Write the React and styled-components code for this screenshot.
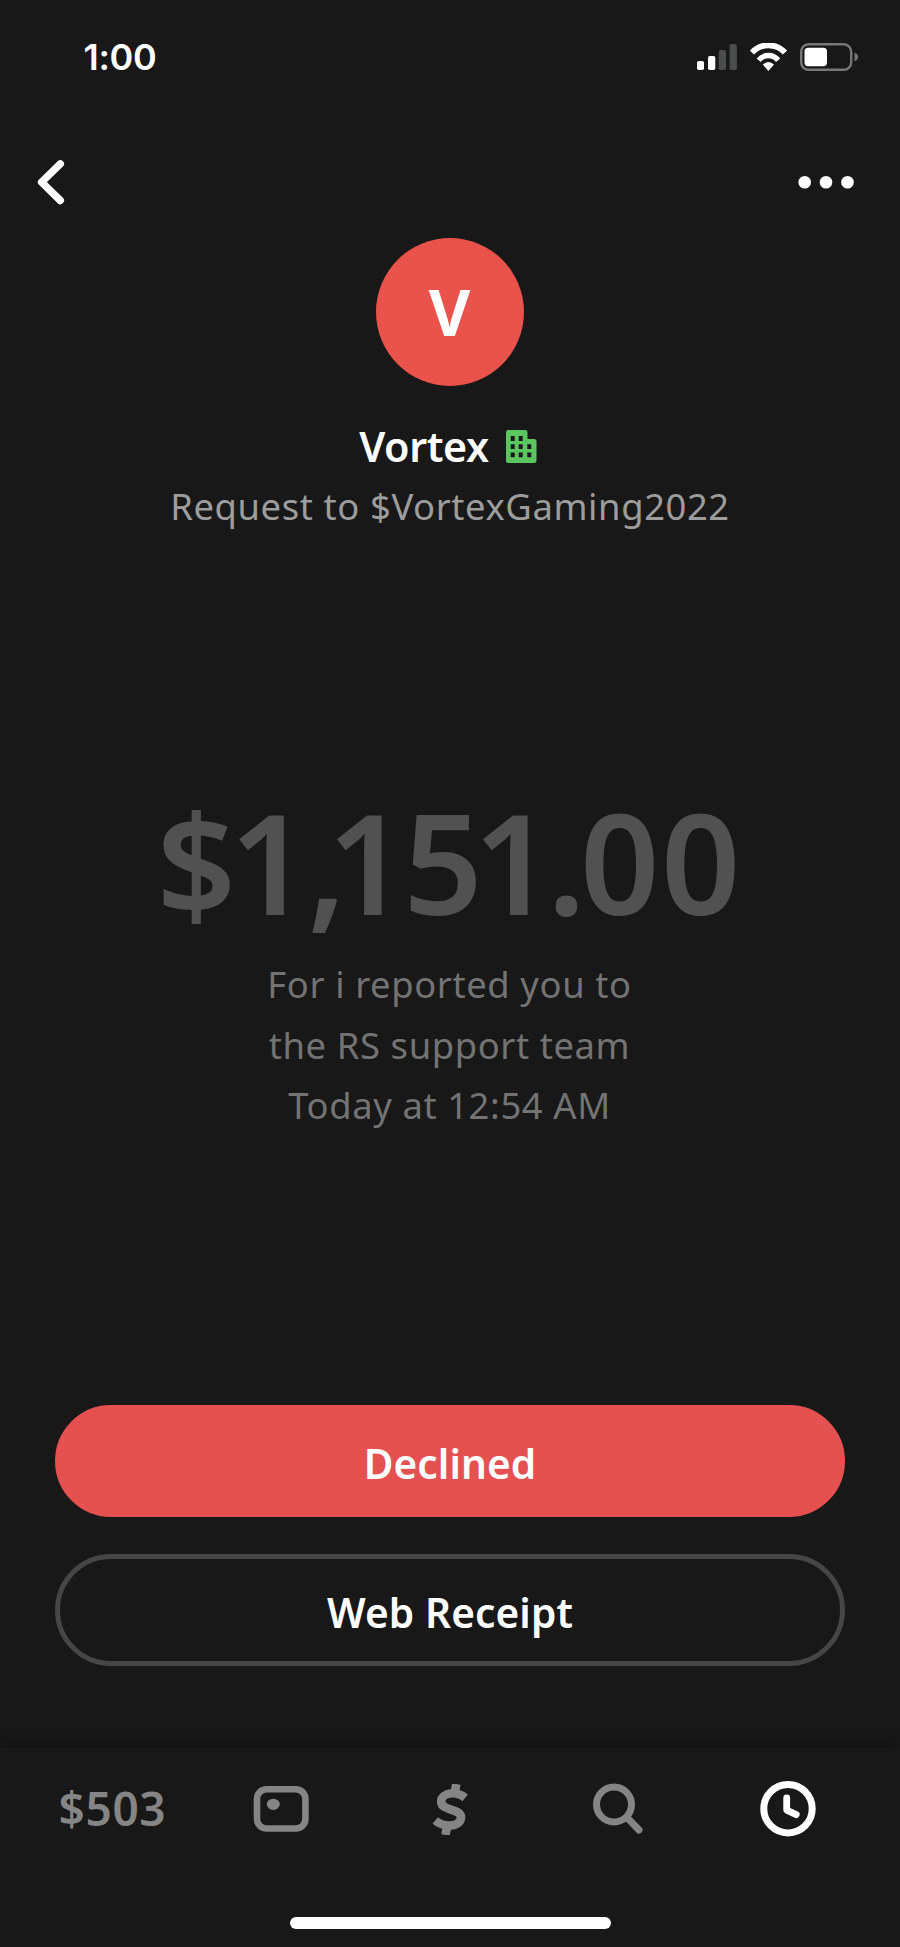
import React from "react";
import styled, { createGlobalStyle } from "styled-components";

const GlobalStyle = createGlobalStyle`
  * {
    box-sizing: border-box;
  }

  body {
    margin: 0;
    background-color: #181818;
  }

  svg {
    display: block;
  }
`;

const Screen = styled.main`
  width: 900px;
  height: 1947px;
  display: flex;
  flex-direction: column;
  background-color: #181818;
  color: #ffffff;
  font-family: "Noto Sans", "Open Sans", sans-serif;
  overflow: hidden;
`;

const StatusBar = styled.div`
  height: 114px;
  padding: 0 42px 0 83.5px;
  display: flex;
  align-items: center;
  justify-content: space-between;
`;

const Time = styled.span`
  font-family: "Inter", sans-serif;
  font-size: 36px;
  font-weight: 600;
  line-height: 40px;
  letter-spacing: -0.3px;
`;

const StatusIcons = styled.div`
  display: flex;
  align-items: center;
  gap: 13px;
`;

const Header = styled.header`
  height: 123.5px;
  padding: 12px 46px 0 37px;
  display: flex;
  align-items: center;
  justify-content: space-between;
`;

const Profile = styled.section`
  display: flex;
  flex-direction: column;
  align-items: center;
`;

const Avatar = styled.div`
  width: 148px;
  height: 148px;
  padding-right: 1px;
  border-radius: 50%;
  background-color: #e9534b;
  display: flex;
  align-items: center;
  justify-content: center;
  font-size: 64px;
  font-weight: 700;
  line-height: 146px;
`;

const NameRow = styled.div`
  height: 60px;
  margin: 30.5px 4px 0 0;
  display: flex;
  align-items: center;
  gap: 17px;
`;

const Name = styled.h1`
  margin: 0;
  font-size: 41.3px;
  font-weight: 600;
  line-height: 60px;
  letter-spacing: -0.4px;
`;

const Handle = styled.p`
  margin: 5px 0 0;
  font-size: 36.4px;
  line-height: 50px;
  letter-spacing: 0.6px;
  color: #9d9d9d;
`;

const Payment = styled.section`
  margin-top: 255px;
  display: flex;
  flex-direction: column;
  align-items: center;
`;

const Amount = styled.div`
  padding-right: 3px;
  font-size: 139px;
  font-weight: 600;
  line-height: 150px;
  color: #515151;
  white-space: nowrap;
`;

const Glyph = styled.span`
  letter-spacing: ${(p) => p.$spacing}px;
`;

const Note = styled.p`
  width: 400px;
  margin: 18px 0 0;
  padding-right: 1px;
  font-size: 36.4px;
  line-height: 60.5px;
  letter-spacing: 0.6px;
  text-align: center;
  color: #737373;
`;

const Actions = styled.section`
  margin-top: auto;
  padding: 0 55px;
  display: flex;
  flex-direction: column;
  gap: 37px;
`;

const Button = styled.button`
  height: 112px;
  padding: 5px 0 0;
  border: 5px solid ${(p) => (p.$filled ? "#e55151" : "#464646")};
  border-radius: 56px;
  background-color: ${(p) => (p.$filled ? "#e55151" : "transparent")};
  color: #ffffff;
  font-family: inherit;
  font-size: 40.6px;
  font-weight: 600;
  line-height: 56px;
  letter-spacing: 0.1px;
`;

const TabBar = styled.nav`
  height: 122px;
  margin-top: 82px;
  padding: 0 28px;
  display: grid;
  grid-template-columns: repeat(5, 1fr);
  align-items: center;
  justify-items: center;
  background-color: #181818;
  box-shadow: 0 -4px 14px rgba(0, 0, 0, 0.25);
`;

const Tab = styled.div`
  color: ${(p) => (p.$active ? "#ffffff" : "#858585")};
`;

const Balance = styled.span`
  display: block;
  margin-top: -2px;
  font-size: 46px;
  font-weight: 600;
  line-height: 60px;
  letter-spacing: 0.6px;
`;

const HomeArea = styled.div`
  height: 77px;
  padding-top: 47px;
  background-color: #181818;
`;

const HomeIndicator = styled.div`
  width: 321px;
  height: 12px;
  margin: 0 auto;
  border-radius: 6px;
  background-color: #ffffff;
`;

const SignalIcon = () => (
  <svg width="40" height="26" viewBox="0 0 40 26">
    <rect x="0" y="17" width="7" height="9" rx="1.8" fill="#fff" />
    <rect x="11" y="12" width="7.3" height="14" rx="1.8" fill="#fff" />
    <rect x="21.7" y="6" width="7.3" height="20" rx="1.8" fill="#4b4d4d" />
    <rect x="32.6" y="0" width="7.3" height="26" rx="1.8" fill="#4b4d4d" />
  </svg>
);

const WifiIcon = () => (
  <svg width="37" height="29" viewBox="0 0 37 29">
    <g fill="none" stroke="#fff">
      <path d="M1.9 9.6A22.3 22.3 0 0 1 34.9 9.6" strokeWidth="5.8" />
      <path d="M8.7 17.2A12.4 12.4 0 0 1 28.1 17.2" strokeWidth="5.4" />
    </g>
    <path d="M18.4 28L12.8 21.6Q18.4 16.4 24 21.6Z" fill="#fff" />
  </svg>
);

const BatteryIcon = () => (
  <svg width="58" height="28" viewBox="0 0 58 28">
    <rect x="1.2" y="1.2" width="50" height="25.6" rx="7.5" fill="none" stroke="#777" strokeWidth="2.4" />
    <rect x="4.5" y="4.8" width="22.5" height="18.4" rx="3.6" fill="#fff" />
    <path d="M54.5 9.8Q58 11 58 14T54.5 18.2Z" fill="#777" />
  </svg>
);

const BackIcon = () => (
  <svg width="28" height="46" viewBox="0 0 28 46">
    <path
      d="M23.3 4.9L4.6 23.2L23.3 41.5"
      fill="none"
      stroke="#fff"
      strokeWidth="7.4"
      strokeLinecap="round"
      strokeLinejoin="round"
    />
  </svg>
);

const MoreIcon = () => (
  <svg width="56" height="14" viewBox="0 0 56 14">
    <circle cx="6.7" cy="7.2" r="6.3" fill="#fff" />
    <circle cx="28" cy="7.2" r="6.3" fill="#fff" />
    <circle cx="49.5" cy="7.2" r="6.3" fill="#fff" />
  </svg>
);

const BuildingIcon = () => (
  <svg width="31" height="33" viewBox="0 0 31 33">
    <path
      d="M2.5 0H19Q21.5 0 21.5 2.5V9H28Q30.5 9 30.5 11.5V30.5Q30.5 33 28 33H2.5Q0 33 0 30.5V2.5Q0 0 2.5 0Z"
      fill="#5bc660"
    />
    <path
      d="M4.7 6h4v5h-4zM12.7 6h4v5h-4zM4.7 14.3h4v4.8h-4zM12.7 14.3h4v4.8h-4zM21.3 14.3h4v4.8h-4zM4.7 22.4h4v4.8h-4zM12.7 22.4h4v4.8h-4zM21.3 22.4h4v4.8h-4z"
      fill="#181818"
    />
  </svg>
);

const CardIcon = () => (
  <svg width="56" height="46" viewBox="0 0 56 46">
    <rect x="4" y="3.3" width="48.4" height="39.2" rx="9.5" fill="none" stroke="currentColor" strokeWidth="6.6" />
    <ellipse cx="20.3" cy="18.3" rx="6.5" ry="5.6" fill="currentColor" />
  </svg>
);

const DollarIcon = () => (
  <svg width="36" height="51" viewBox="0 0 36 51">
    <g fill="none" stroke="currentColor" strokeWidth="8.6">
      <path d="M33.2 13.8C28.5 10 24 9 20 9.3C13.5 9.7 9.2 13 9.2 17.4C9.2 22.5 14 24 19 25.6C24.5 27.3 29 29 29 33.3C29 38.8 23 42 17 41.6C11.5 41.3 7.5 40 3.2 36.5" />
      <path d="M24.2 0L23 8M14.8 43L13.6 51" />
    </g>
  </svg>
);

const SearchIcon = () => (
  <svg width="52" height="52" viewBox="0 0 52 52">
    <g fill="none" stroke="currentColor">
      <circle cx="21" cy="21.5" r="17.5" strokeWidth="7" />
      <path d="M34 34.5L46 47" strokeWidth="7" strokeLinecap="round" />
    </g>
  </svg>
);

const ClockIcon = () => (
  <svg width="56" height="56" viewBox="0 0 56 56">
    <g fill="none" stroke="currentColor" strokeWidth="7">
      <circle cx="28" cy="27.7" r="24.2" />
      <path d="M26.7 17V29.1L36.2 33.6" strokeWidth="6.8" strokeLinecap="round" strokeLinejoin="round" />
    </g>
  </svg>
);

// each glyph keeps its own advance, the ones and the comma sit tighter
const amount = [
  ["$", -6.5],
  ["1", -1.5],
  [",", -19],
  ["1", -3.5],
  ["5", -9.5],
  ["1", -5.5],
  [".", -5.6],
  ["0", 1.5],
  ["0", 0],
];

const tabs = [
  { id: "balance", content: <Balance>$503</Balance> },
  { id: "card", content: <CardIcon /> },
  { id: "pay", content: <DollarIcon /> },
  { id: "search", content: <SearchIcon /> },
  { id: "activity", content: <ClockIcon />, active: true },
];

const App = () => {
  return (
    <Screen>
      <GlobalStyle />
      <StatusBar>
        <Time>1:00</Time>
        <StatusIcons>
          <SignalIcon />
          <WifiIcon />
          <BatteryIcon />
        </StatusIcons>
      </StatusBar>
      <Header>
        <BackIcon />
        <MoreIcon />
      </Header>
      <Profile>
        <Avatar>V</Avatar>
        <NameRow>
          <Name>Vortex</Name>
          <BuildingIcon />
        </NameRow>
        <Handle>Request to $VortexGaming2022</Handle>
      </Profile>
      <Payment>
        <Amount>
          {amount.map(([char, spacing], i) => (
            <Glyph key={i} $spacing={spacing}>
              {char}
            </Glyph>
          ))}
        </Amount>
        <Note>
          For i reported you to
          <br />
          the RS support team
          <br />
          Today at 12:54 AM
        </Note>
      </Payment>
      <Actions>
        <Button $filled>Declined</Button>
        <Button>Web Receipt</Button>
      </Actions>
      <TabBar>
        {tabs.map((tab) => (
          <Tab key={tab.id} $active={tab.active}>
            {tab.content}
          </Tab>
        ))}
      </TabBar>
      <HomeArea>
        <HomeIndicator />
      </HomeArea>
    </Screen>
  );
};

export default App;
